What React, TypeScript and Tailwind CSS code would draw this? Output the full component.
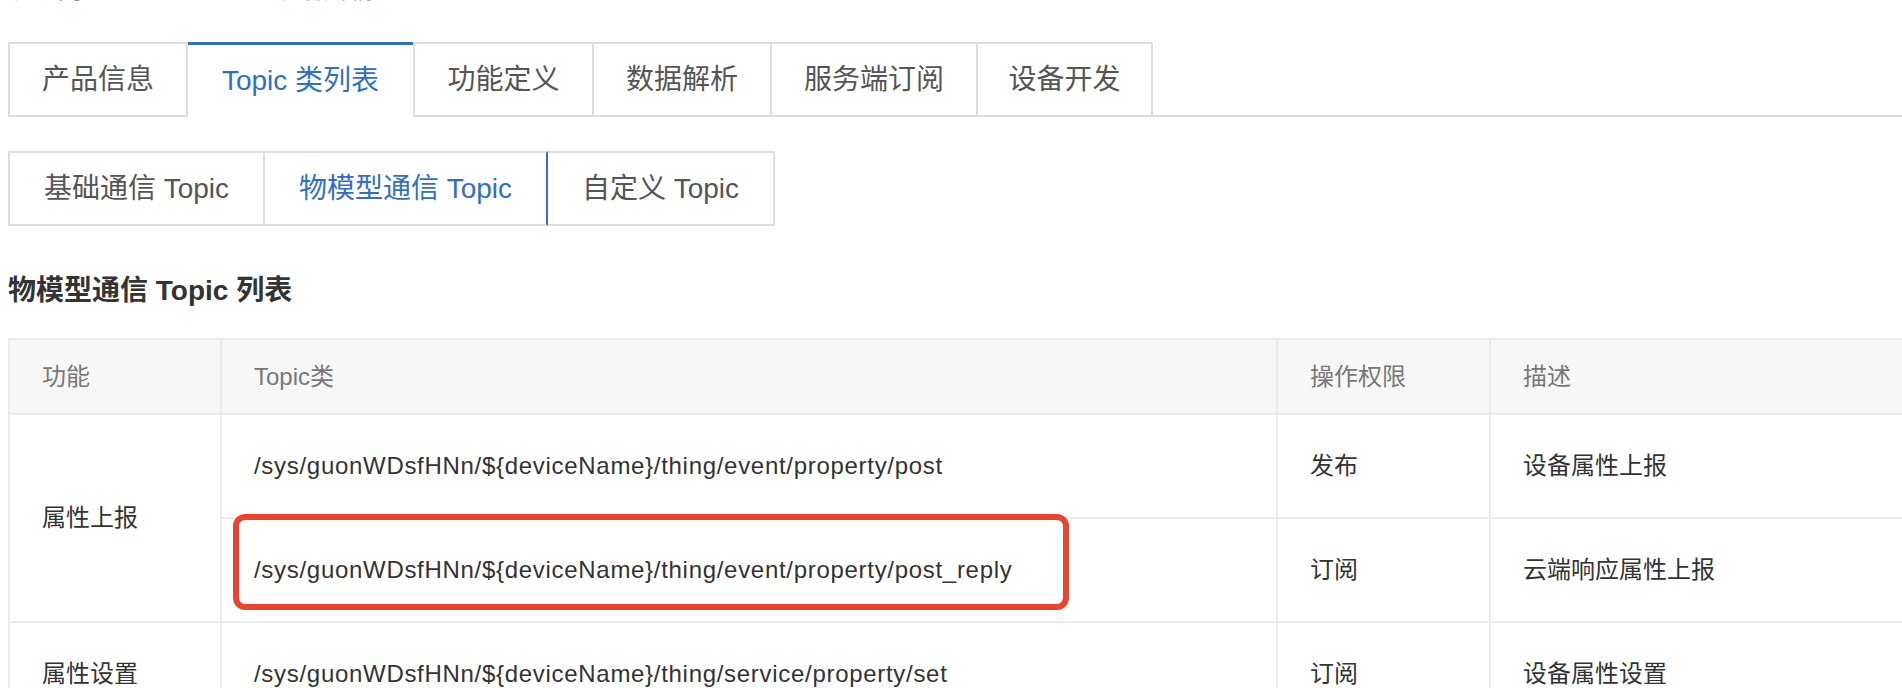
import React from "react";

const BLUE = "#2f6fc6";

export default function App() {
  const rows = [
    { path: "/sys/guonWDsfHNn/${deviceName}/thing/event/property/post", perm: "发布", desc: "设备属性上报" },
    { path: "/sys/guonWDsfHNn/${deviceName}/thing/event/property/post_reply", perm: "订阅", desc: "云端响应属性上报" },
  ];
  const cell = "flex items-center pl-[32px] border-l-2 border-t-2 border-[#ebebeb]";
  return (
    <div className="w-[1902px] h-[688px] overflow-hidden bg-white font-['Liberation_Sans','Noto_Sans_CJK_SC',sans-serif] text-[#333]">
      {/* breadcrumb remnant */}
      <div className="h-[2px] overflow-hidden">
        <div className="-mt-[22px] flex items-start text-[24px] leading-[24px]">
          <span className="ml-[10px] text-[#777]">物联网</span>
          <span className="ml-[200px] text-[23px] text-[#2f6fc6]">产品详情</span>
        </div>
      </div>

      {/* main tabs */}
      <div className="mt-[40px] flex pl-[8px] text-[28px] leading-[28px] text-[#555]">
        <div className="flex h-[75px] w-[180px] items-center justify-center border-2 border-[#dddddd]">产品信息</div>
        <div className="flex h-[75px] w-[225px] items-center justify-center border-t-[3px] border-[#2f6fc6] text-[#2f6fc6]">
          Topic 类列表
        </div>
        <div className="flex h-[75px] w-[179px] items-center justify-center border-y-2 border-l-2 border-[#dddddd]">功能定义</div>
        <div className="flex h-[75px] w-[178px] items-center justify-center border-y-2 border-l-2 border-[#dddddd]">数据解析</div>
        <div className="flex h-[75px] w-[206px] items-center justify-center border-y-2 border-l-2 border-[#dddddd]">服务端订阅</div>
        <div className="flex h-[75px] w-[177px] items-center justify-center border-2 border-[#dddddd]">设备开发</div>
        <div className="flex-1 border-b-2 border-[#dddddd]" />
      </div>

      {/* sub tabs */}
      <div className="mt-[34px] flex pl-[8px] text-[28px] leading-[28px] text-[#555]">
        <div className="flex h-[75px] w-[257px] items-center justify-center border-2 border-[#dddddd]">基础通信 Topic</div>
        <div className="flex h-[75px] w-[283px] items-center justify-center border-y-2 border-r-2 border-[#dddddd] border-r-[#2f6fc6] text-[#2f6fc6]">
          物模型通信 Topic
        </div>
        <div className="flex h-[75px] w-[227px] items-center justify-center border-y-2 border-r-2 border-[#dddddd]">自定义 Topic</div>
      </div>

      {/* heading */}
      <div className="mt-[51px] pl-[8px] text-[28px] font-bold leading-[28px] text-[#333]">物模型通信 Topic 列表</div>

      {/* table */}
      <div className="relative ml-[8px] mt-[33px] w-[1910px]">
        <div className="grid grid-cols-[212px_1056px_213px_1fr] grid-rows-[75px_104px_104px_104px] text-[24px] leading-[24px]">
          <div className={`${cell} bg-[#f7f7f7] text-[#777]`}>功能</div>
          <div className={`${cell} bg-[#f7f7f7] text-[#777]`}>Topic类</div>
          <div className={`${cell} bg-[#f7f7f7] text-[#777]`}>操作权限</div>
          <div className={`${cell} bg-[#f7f7f7] text-[#777]`}>描述</div>

          <div className={`${cell} row-span-2`}>属性上报</div>
          <div className={`${cell} tracking-[0.7px]`}>{rows[0].path}</div>
          <div className={cell}>{rows[0].perm}</div>
          <div className={cell}>{rows[0].desc}</div>

          <div className={`${cell} tracking-[0.7px]`}>{rows[1].path}</div>
          <div className={cell}>{rows[1].perm}</div>
          <div className={cell}>{rows[1].desc}</div>

          <div className={cell}>属性设置</div>
          <div className={`${cell} tracking-[0.7px]`}>{"/sys/guonWDsfHNn/${deviceName}/thing/service/property/set"}</div>
          <div className={cell}>订阅</div>
          <div className={cell}>设备属性设置</div>
        </div>

        {/* annotation */}
        <div className="pointer-events-none absolute left-[225px] top-[176px] h-[96px] w-[836px] rounded-[12px] border-[6px] border-[#ea4330]" />
      </div>
    </div>
  );
}
